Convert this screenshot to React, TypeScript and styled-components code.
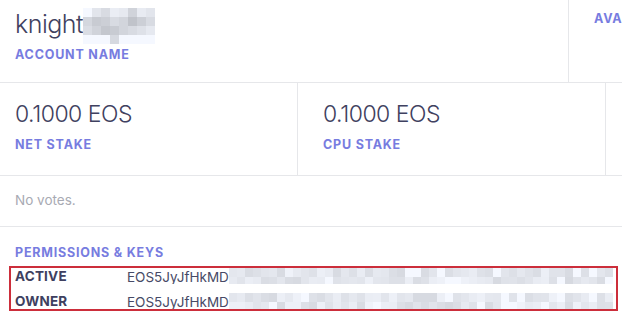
import styled, { createGlobalStyle } from 'styled-components'

const GlobalStyle = createGlobalStyle`
  html, body {
    margin: 0;
    padding: 0;
    background: #ffffff;
  }

  body {
    font-family: Inter, "Noto Sans", sans-serif;
    color: #43455f;
    overflow: hidden;
  }
`

const Page = styled.div`
  width: 622px;
  height: 318px;
  overflow: hidden;
`

const Row = styled.div<{ $height: number }>`
  display: flex;
  height: ${(p) => p.$height}px;
  border-bottom: 1px solid #e6e7ea;
  white-space: nowrap;
`

const Cell = styled.div<{ $width: number; $padLeft: number; $padTop: number }>`
  flex: 0 0 ${(p) => p.$width}px;
  box-sizing: border-box;
  padding: ${(p) => p.$padTop}px 0 0 ${(p) => p.$padLeft}px;
  border-right: 1px solid #e6e7ea;
`

const Value = styled.div<{ $size: number; $lh: number }>`
  display: flex;
  align-items: flex-start;
  font-size: ${(p) => p.$size}px;
  line-height: ${(p) => p.$lh}px;
  font-weight: 300;
  color: #3f4160;
  letter-spacing: -0.5px;
`

const Label = styled.div<{ $gap?: number }>`
  margin-top: ${(p) => p.$gap ?? 0}px;
  font-size: 12.5px;
  line-height: 16px;
  font-weight: 700;
  letter-spacing: 0.8px;
  text-transform: uppercase;
  color: #777ce0;
`

const Note = styled.div`
  padding: 14px 15px 0;
  font-size: 13.5px;
  line-height: 20px;
  color: #a8aab3;
`

const Section = styled.section`
  padding: 18px 9px 0;
`

const SectionTitle = styled(Label)`
  padding-left: 6px;
  margin-bottom: 5px;
`

const KeyBox = styled.div`
  display: flex;
  flex-direction: column;
  gap: 9px;
  width: 609px;
  box-sizing: border-box;
  border: 2px solid #cc2e3b;
  padding-left: 4px;
`

const KeyRow = styled.div`
  display: grid;
  grid-template-columns: 112px 1fr;
  height: 16px;
  line-height: 16px;
  font-size: 13.5px;
  white-space: nowrap;
  overflow: hidden;
`

const KeyName = styled.span`
  font-weight: 700;
  color: #3e4060;
  letter-spacing: 0.2px;
`

const KeyValue = styled.span`
  display: flex;
  align-items: center;
  color: #474a66;
`

const MosaicGrid = styled.span<{ $cols: number; $cell: number; $rowH: number }>`
  display: inline-grid;
  grid-template-columns: repeat(${(p) => p.$cols}, ${(p) => p.$cell}px);
  grid-auto-rows: ${(p) => p.$rowH}px;
  flex: none;
`

const Tile = styled.span`
  display: block;
`

// pixelated stand-in for the redacted parts of the screenshot
const Mosaic = ({
  shades,
  cell,
  rowH,
}: {
  shades: number[][]
  cell: number
  rowH: number
}) => (
  <MosaicGrid $cols={shades[0].length} $cell={cell} $rowH={rowH}>
    {shades.flatMap((row, r) =>
      row.map((v, c) => (
        <Tile
          key={`${r}-${c}`}
          style={{ background: `rgb(${v - 6}, ${v - 3}, ${v + 4})` }}
        />
      ))
    )}
  </MosaicGrid>
)

const nameShades = [
  [251, 232, 222, 240, 236, 214, 238, 232],
  [218, 206, 210, 222, 216, 198, 210, 222],
  [224, 214, 202, 206, 216, 222, 228, 236],
  [251, 251, 251, 220, 251, 251, 251, 251],
]

const keyShades = (seed: number) => {
  let s = seed
  const next = () => {
    s = (s * 9301 + 49297) % 233280
    return s / 233280
  }
  return [0, 1].map(() =>
    Array.from({ length: 48 }, () => {
      const r = next()
      if (r > 0.88) return 251
      return Math.round(220 + r * 28)
    })
  )
}

const activeShades = keyShades(7)
const ownerShades = keyShades(31)

export default function App() {
  return (
    <Page>
      <GlobalStyle />

      <Row $height={82}>
        <Cell $width={569} $padLeft={15} $padTop={8}>
          <Value $size={25} $lh={32}>
            knight
            <Mosaic shades={nameShades} cell={9} rowH={9} />
          </Value>
          <Label $gap={3}>Account Name</Label>
        </Cell>
        <Cell $width={300} $padLeft={25} $padTop={11}>
          <Label>Available</Label>
        </Cell>
      </Row>

      <Row $height={92}>
        <Cell $width={298} $padLeft={15} $padTop={17}>
          <Value $size={23} $lh={28}>0.1000 EOS</Value>
          <Label $gap={9}>Net Stake</Label>
        </Cell>
        <Cell $width={308} $padLeft={25} $padTop={17}>
          <Value $size={23} $lh={28}>0.1000 EOS</Value>
          <Label $gap={9}>CPU Stake</Label>
        </Cell>
        <Cell $width={300} $padLeft={25} $padTop={17} />
      </Row>

      <Row $height={50}>
        <Note>No votes.</Note>
      </Row>

      <Section>
        <SectionTitle>Permissions &amp; Keys</SectionTitle>
        <KeyBox>
          <KeyRow>
            <KeyName>ACTIVE</KeyName>
            <KeyValue>
              EOS5JyJfHkMD
              <Mosaic shades={activeShades} cell={8} rowH={9} />
            </KeyValue>
          </KeyRow>
          <KeyRow>
            <KeyName>OWNER</KeyName>
            <KeyValue>
              EOS5JyJfHkMD
              <Mosaic shades={ownerShades} cell={8} rowH={9} />
            </KeyValue>
          </KeyRow>
        </KeyBox>
      </Section>
    </Page>
  )
}
